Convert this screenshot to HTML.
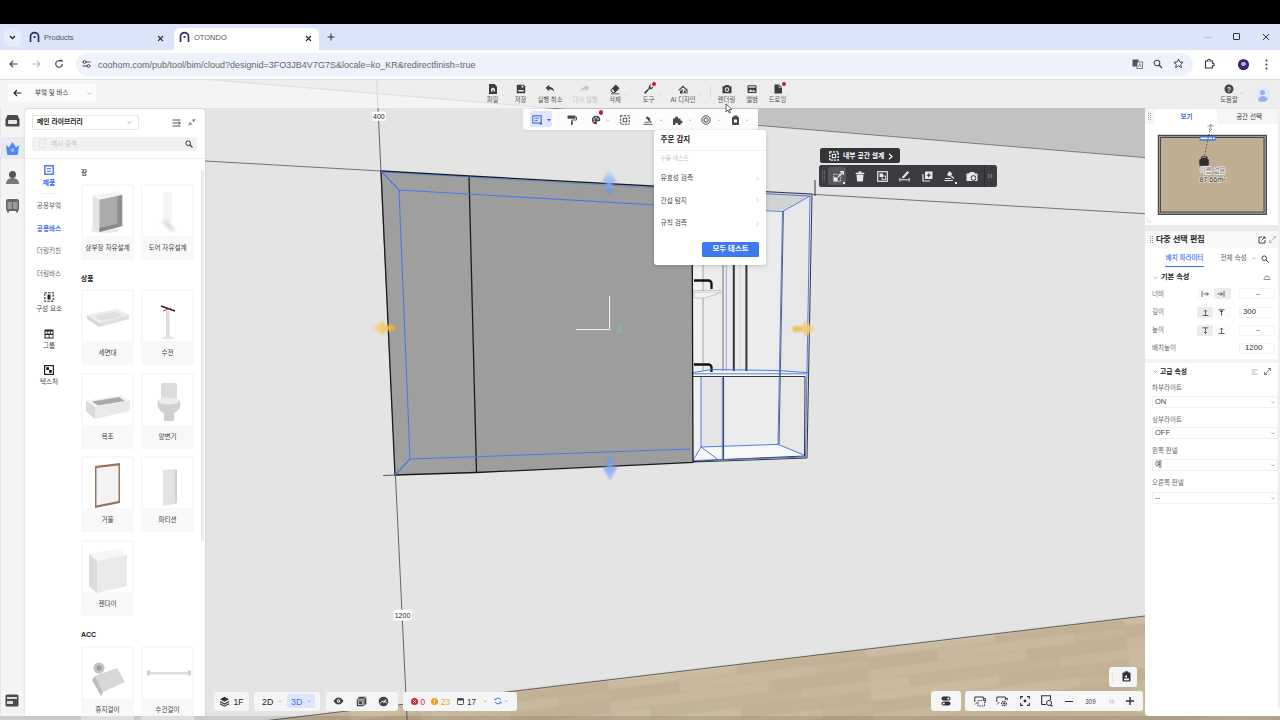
<!DOCTYPE html>
<html lang="ko">
<head>
<meta charset="utf-8">
<title>OTONDO</title>
<style>
*{box-sizing:border-box;margin:0;padding:0}
html,body{width:1280px;height:720px;overflow:hidden;background:#000}
body{font-family:"Liberation Sans","Noto Sans CJK KR",sans-serif;font-size:7px;color:#333;position:relative}
.abs{position:absolute}
#blackbar{left:0;top:0;width:1280px;height:24px;background:#000}
#tabbar{left:0;top:24px;width:1280px;height:26px;background:#dbe4f8}
#addr{left:0;top:50px;width:1280px;height:29px;background:#fff}
#app{left:0;top:79px;width:1280px;height:641px;background:#f3f3f4;overflow:hidden}
.t{position:absolute;white-space:nowrap;line-height:1}
.c{transform:translate(-50%,-50%)}
.cy{transform:translateY(-50%)}
.box{position:absolute;background:#f5f5f5;border-radius:3px}
svg{position:absolute;overflow:visible}
</style>
</head>
<body>
<div id="blackbar" class="abs"></div>

<!-- ===== browser tab bar ===== -->
<div id="tabbar" class="abs">
  <div class="abs" style="left:4px;top:4px;width:17px;height:18px;border-radius:5px;background:#e7edfa"></div>
  <svg style="left:9px;top:11px" width="7" height="5" viewBox="0 0 7 5"><path d="M1 1l2.5 2.5L6 1" fill="none" stroke="#222" stroke-width="1.3"/></svg>
  <!-- tab 1 -->
  <svg style="left:29px;top:7.800px" width="11" height="11" viewBox="0 0 11 11"><path d="M1.5 10V4.2A4 3.6 0 0 1 9.500 4.200V10" fill="none" stroke="#2b2f63" stroke-width="1.7"/><rect x="4.600" y="4" width="1.8" height="2" fill="#2b2f63"/></svg>
  <div class="t cy" style="left:44px;top:14px;font-size:7.5px;color:#555">Products</div>
  <svg style="left:157px;top:10.500px" width="7" height="7" viewBox="0 0 7 7"><path d="M1 1l5 5M6 1L1 6" stroke="#333" stroke-width="1.100"/></svg>
  <!-- tab 2 active -->
  <div class="abs" style="left:174px;top:4px;width:145px;height:23px;background:#fff;border-radius:6px 6px 0 0"></div>
  <svg style="left:179px;top:7.800px" width="11" height="11" viewBox="0 0 11 11"><path d="M1.5 10V4.2A4 3.6 0 0 1 9.500 4.200V10" fill="none" stroke="#2b2f63" stroke-width="1.7"/><rect x="4.600" y="4" width="1.8" height="2" fill="#2b2f63"/></svg>
  <div class="t cy" style="left:194px;top:14px;font-size:7.5px;color:#555">OTONDO</div>
  <svg style="left:305px;top:10.500px" width="7" height="7" viewBox="0 0 7 7"><path d="M1 1l5 5M6 1L1 6" stroke="#222" stroke-width="1.100"/></svg>
  <svg style="left:327px;top:9px" width="8" height="8" viewBox="0 0 8 8"><path d="M4 .5v7M.5 4h7" stroke="#333" stroke-width="1.100"/></svg>
  <!-- window controls -->
  <div class="abs" style="left:1204px;top:13px;width:8px;height:1px;background:#b8c0d0"></div>
  <div class="abs" style="left:1233px;top:9px;width:7px;height:7px;border:1px solid #333;border-radius:1px"></div>
  <svg style="left:1262px;top:9px" width="8" height="8" viewBox="0 0 8 8"><path d="M1 1l6 6M7 1L1 7" stroke="#333" stroke-width="1"/></svg>
</div>

<!-- ===== address bar ===== -->
<div id="addr" class="abs">
  <svg style="left:9px;top:10px" width="9" height="8" viewBox="0 0 9 8"><path d="M8.500 4H1M4 1L1 4l3 3" fill="none" stroke="#444" stroke-width="1.100"/></svg>
  <svg style="left:32px;top:10px" width="9" height="8" viewBox="0 0 9 8"><path d="M.5 4H8M5 1l3 3-3 3" fill="none" stroke="#b5b5b5" stroke-width="1.100"/></svg>
  <svg style="left:54px;top:9px" width="10" height="10" viewBox="0 0 10 10"><path d="M8.300 5A3.300 3.300 0 1 1 7 2.300" fill="none" stroke="#444" stroke-width="1.200"/><path d="M5.800.8h2.700v2.700z" fill="#444"/></svg>
  <div class="abs" style="left:76px;top:3px;width:1117px;height:23px;border-radius:12px;background:#eef2fb"></div>
  <svg style="left:82px;top:10px" width="9" height="8" viewBox="0 0 9 8"><path d="M.5 2h8M.5 6h8" stroke="#444" stroke-width="1"/><circle cx="2.500" cy="2" r="1.400" fill="#eef2fb" stroke="#444"/><circle cx="6.500" cy="6" r="1.400" fill="#eef2fb" stroke="#444"/></svg>
  <div class="t cy" style="left:98px;top:14.500px;font-size:9px;color:#666">coohom.com/pub/tool/bim/cloud?designid=3FO3JB4V7G7S&amp;locale=ko_KR&amp;redirectfinish=true</div>
  <!-- right icons -->
  <svg style="left:1132px;top:9px" width="11" height="10" viewBox="0 0 11 10"><rect x=".5" y=".5" width="6" height="7" fill="#555"/><rect x="5" y="3" width="5.500" height="6.500" fill="#fff" stroke="#555" stroke-width=".8"/><path d="M6.500 8l1.300-3.500L9 8" fill="none" stroke="#555" stroke-width=".7"/></svg>
  <svg style="left:1153px;top:9px" width="10" height="10" viewBox="0 0 10 10"><circle cx="4" cy="4" r="2.800" fill="none" stroke="#444" stroke-width="1.100"/><path d="M6 6l3 3" stroke="#444" stroke-width="1.200"/></svg>
  <svg style="left:1173px;top:8px" width="11" height="11" viewBox="0 0 11 11"><path d="M5.500 1l1.400 3 3.200.3-2.400 2.100.7 3.200-2.900-1.700-2.900 1.700.7-3.200L.9 4.300 4.100 4z" fill="none" stroke="#333" stroke-width=".9"/></svg>
  <svg style="left:1204px;top:8px" width="11" height="11" viewBox="0 0 11 11"><path d="M1.500 3h2.300a1.300 1.300 0 1 1 2.400 0H8.500v2.300a1.300 1.300 0 1 1 0 2.400V10h-7z" fill="none" stroke="#333" stroke-width="1.100"/></svg>
  <div class="abs" style="left:1238px;top:9px;width:11px;height:11px;border-radius:50%;background:radial-gradient(circle at 50% 45%,#c9a0d8 0 25%,#3b2a6e 30% 60%,#1d1740 65%)"></div>
  <svg style="left:1265px;top:9px" width="3" height="11" viewBox="0 0 3 11"><circle cx="1.500" cy="1.500" r="1" fill="#333"/><circle cx="1.500" cy="5.500" r="1" fill="#333"/><circle cx="1.500" cy="9.500" r="1" fill="#333"/></svg>
</div>

<!-- ===== app ===== -->
<div id="app" class="abs">

<!-- ===== 3D viewport scene (coords are page coords; svg offset -79) ===== -->
<svg id="scene" style="left:0;top:-79px" width="1280" height="720" viewBox="0 0 1280 720">
  <defs>
    <pattern id="wood" width="260" height="44" patternUnits="userSpaceOnUse" patternTransform="rotate(-7)">
      <rect width="260" height="44" fill="#c6b69b"/>
      <rect x="0" y="0" width="130" height="11" fill="#cabba1"/>
      <rect x="130" y="0" width="130" height="11" fill="#c2b195"/>
      <rect x="0" y="11" width="70" height="11" fill="#c1b094"/>
      <rect x="70" y="11" width="140" height="11" fill="#c9ba9f"/>
      <rect x="210" y="11" width="50" height="11" fill="#c4b498"/>
      <rect x="0" y="22" width="160" height="11" fill="#c8b99e"/>
      <rect x="160" y="22" width="100" height="11" fill="#c1b095"/>
      <rect x="0" y="33" width="40" height="11" fill="#cabba0"/>
      <rect x="40" y="33" width="150" height="11" fill="#c3b397"/>
      <rect x="190" y="33" width="70" height="11" fill="#c7b89d"/>
    <path d="M0 0h260M0 11h260M0 22h260M0 33h260" stroke="#a89878" stroke-width=".6" opacity=".55"/><path d="M130 0v11M70 11v11M210 11v11M160 22v11M40 33v11M190 33v11" stroke="#a89878" stroke-width=".6" opacity=".5"/></pattern>
    <filter id="blur1"><feGaussianBlur stdDeviation="1.2"/></filter>
  </defs>
  <!-- wall -->
  <rect x="0" y="79" width="1280" height="641" fill="#e4e4e4"/>
  <!-- ceiling -->
  <polygon points="201,79 1280,79 1280,168.800" fill="#c2c2c2"/>
  <path d="M201 79L1145 157.600" stroke="#666" stroke-width=".8"/>
  <!-- wall line -->
  <path d="M205 161L381 171M812 194.300L1145 213.700" stroke="#555" stroke-width=".8"/>
  <!-- floor -->
  <polygon points="205,728 1290,598.700 1290,730 205,730" fill="url(#wood)" filter="url(#blur1)"/>
  <path d="M205 728L1145 616" stroke="#555" stroke-width=".9"/>
  <!-- vertical dimension line -->
  <path d="M376.600 79L407.200 722" stroke="#444" stroke-width=".8"/>

  <!-- cabinet: right open unit interior -->
  <polygon points="693,188 812,194 807,458 693,462" fill="#ebebeb"/>
  <polygon points="782.500,210.500 812,194 807,458 778,444.400" fill="#e7e7e7"/>
  <polygon points="693,188 812,194 782.500,210.500 693,206" fill="#d2d2d2"/>
  <!-- lower section fills -->
  <polygon points="693,377 701,377 701,447 693,461" fill="#f1f1f1"/>
  <polygon points="701,377 723,377 723,446.300 701,447" fill="#e5e5e5"/>
  <polygon points="723,377 778,377 778,444.400 723,446.300" fill="#ececec"/>
  <polygon points="693,461.600 718.400,459.800 805,456 778,444.400 701,447" fill="#f7f7f7"/>
  <!-- shelf -->
  <polygon points="693,371 808,372.500 805,376.500 693,376.500" fill="#f6f6f6"/>
  <!-- rods -->
  <rect x="694" y="250" width="9" height="121" fill="#f1f1f1"/>
  <path d="M703 250V371" stroke="#777" stroke-width=".6"/>
  <path d="M723 250V371" stroke="#444" stroke-width=".7"/>
  <path d="M726.300 250V371" stroke="#6a7fc0" stroke-width=".6"/>
  <path d="M733.800 250V371" stroke="#333" stroke-width="2"/>
  <path d="M746.400 250V371" stroke="#333" stroke-width="2"/>
  <path d="M740 250V371" stroke="#bbb" stroke-width=".5"/>
  <!-- hooks + small shelf -->
  <path d="M694 280.500h14.500a3 3 0 0 1 3 3V289" fill="none" stroke="#111" stroke-width="2.300"/>
  <path d="M694 364.500h14.500a3 3 0 0 1 3 3V372" fill="none" stroke="#111" stroke-width="2.300"/>
  <path d="M694 290.500h28.500v1.500l-18 6h-10.500z" fill="#f2f2f2" stroke="#999" stroke-width=".5"/>
  <path d="M694 292.300h28.500" stroke="#bbb" stroke-width=".6"/>
  <!-- black edges -->
  <g fill="none" stroke="#222" stroke-width=".9">
    <path d="M693 188L812 194L807 458L693 462"/>
    <path d="M693 376.500H805"/>
    <path d="M723.600 376.500V460M805 376.500L804.500 456"/>
    <path d="M693 461.600L718.400 459.800L805 456"/>
    <path d="M815 180V196"/><path d="M783.400 211L779 444.400" stroke-width=".7"/>
  </g>
  <!-- blue edges -->
  <g fill="none" stroke="#3e6ee8" stroke-width=".9">
    <path d="M693 190L810 196L805.500 457L693 460.500"/>
    <path d="M810 196L782.500 211.500L778 444.400L804 455"/>
    <path d="M693 207L782.500 211.500"/>
    <path d="M693 372.500L712 369.500L778 370.500L808 372.700M693 373.800H806"/>
    <path d="M701 376.500V447M722.300 376.500V460"/>
    <path d="M701 447L778 444.400M701 447L718.400 459.800M701 447L693 460.500"/>
  </g>

  <!-- cabinet grey faces -->
  <polygon points="381,171 469,176 476.500,472.500 395,475" fill="#9f9f9f"/>
  <polygon points="469,176 692,188 693,462.500 476.500,472.500" fill="#9d9d9d"/>
  <g fill="none" stroke="#1a1a1a" stroke-width="1.300">
    <path d="M381 171L469 176L692 188L693 462.500L476.500 472.500L395 475Z"/>
    <path d="M469 176L476.500 472.500"/>
  </g>
  <path d="M383 475.500l12-.5" stroke="#333" stroke-width=".8"/>
  <g fill="none" stroke="#4a78ea" stroke-width="1.100">
    <path d="M399 190L690 207M410 459L690 449M399 190L410 459"/>
    <path d="M381 171L399 190M395 475L410 459"/>
    <path d="M383 172L692 190" opacity=".6"/>
  </g>
  <!-- axis gizmo -->
  <path d="M609.600 296V329.600H576" fill="none" stroke="#f6f6f6" stroke-width="1"/>
  <path d="M616 333l3.500-11 3.500 11z" fill="#7ccaa8" opacity=".5"/>
  <!-- arrows -->
  <linearGradient id="gu" x1="0" y1="0" x2="0" y2="1"><stop offset="0" stop-color="#dfe8fb"/><stop offset=".55" stop-color="#8fb0f3"/><stop offset="1" stop-color="#5f8ff0"/></linearGradient>
  <linearGradient id="gd" x1="0" y1="1" x2="0" y2="0"><stop offset="0" stop-color="#a9c2f6"/><stop offset=".55" stop-color="#7ea3f2"/><stop offset="1" stop-color="#6a96f0"/></linearGradient>
  <linearGradient id="gl" x1="0" y1="0" x2="1" y2="0"><stop offset="0" stop-color="#f7d98f"/><stop offset="1" stop-color="#f0b43a"/></linearGradient>
  <linearGradient id="gr" x1="1" y1="0" x2="0" y2="0"><stop offset="0" stop-color="#f7d98f"/><stop offset="1" stop-color="#f0b43a"/></linearGradient>
  <g opacity=".82">
    <path d="M609.200 167.500l7.500 15h-4.500v10.500h-6v-10.500h-4.500z" fill="url(#gu)" filter="url(#blur1)"/>
    <path d="M610 481l7.500-14h-4.500v-9.500h-6v9.500h-4.500z" fill="url(#gd)" filter="url(#blur1)"/>
  </g>
  <g opacity=".85">
    <path d="M372 328l12-8v5h11v6h-11v5z" fill="url(#gl)" filter="url(#blur1)"/>
    <path d="M816 329l-12-8v5h-11v6h11v5z" fill="url(#gr)" filter="url(#blur1)"/>
  </g>
  <!-- dimension labels -->
  <rect x="372" y="111.800" width="13.800" height="9" rx="1.500" fill="#fff"/>
  <text x="378.900" y="118.900" font-size="7" text-anchor="middle" fill="#222" font-family="Liberation Sans, sans-serif">400</text>
  <rect x="393.300" y="609.400" width="18.400" height="11.200" rx="1.800" fill="#fff"/>
  <text x="402.500" y="617.500" font-size="7" text-anchor="middle" fill="#222" font-family="Liberation Sans, sans-serif">1200</text>
</svg>
<!--SCENE_END-->

<!-- ===== app top toolbar ===== -->
<div class="abs" style="left:0;top:0;width:1280px;height:29px;background:rgba(249,249,250,.79)"></div><div class="abs" style="left:0;top:0;width:1280px;height:1px;background:#dcdde0"></div>
<div class="abs" style="left:8px;top:5px;width:88px;height:18px;background:#fbfbfb;border-radius:3px"></div>
<svg style="left:13px;top:10px" width="9" height="8" viewBox="0 0 9 8"><path d="M8.500 4H1M4 1L1 4l3 3" fill="none" stroke="#222" stroke-width="1.100"/></svg>
<div class="t cy" style="left:35px;top:14px;font-size:6.500px;color:#333">부엌 및 바스</div>
<svg style="left:87px;top:13px" width="5" height="3" viewBox="0 0 5 3"><path d="M.5.5l2 2 2-2" fill="none" stroke="#aaa" stroke-width=".8"/></svg>
<svg style="left:487.5px;top:5.0px" width="10" height="10" viewBox="0 0 10 10"><path d="M1 0h5.500L9 2.500V10H1z" fill="#3d3d3d"/><path d="M3 7.500V5l2-1.600L7 5v2.500z" fill="#f4f4f4"/><rect x="4.400" y="5.600" width="1.200" height="1.900" fill="#3d3d3d"/></svg>
<div class="t c" style="left:492.5px;top:21px;font-size:6.300px;color:#555">파일</div>
<svg style="left:515.5px;top:5.0px" width="10" height="10" viewBox="0 0 10 10"><path d="M.8.800h7l1.400 1.400v7H.8z" fill="#3d3d3d"/><rect x="5.600" y="1.600" width="1.800" height="2" fill="#f0f0f0"/><rect x="2.300" y="6" width="5.400" height="1.500" fill="#f0f0f0"/></svg>
<div class="t c" style="left:520.5px;top:21px;font-size:6.300px;color:#555">저장</div>
<svg style="left:545.0px;top:5.0px" width="10" height="10" viewBox="0 0 10 10"><path d="M4.200.8L.6 4l3.600 3.200V5.200c2.400-.1 4 .7 5 2.800C9 4.800 7.300 3 4.200 2.800z" fill="#3d3d3d"/></svg>
<div class="t c" style="left:550px;top:21px;font-size:6.300px;color:#555">실행 취소</div>
<svg style="left:580.0px;top:5.0px" width="10" height="10" viewBox="0 0 10 10"><path d="M5.800.8L9.400 4 5.800 7.200V5.200c-2.400-.1-4 .7-5 2.800C1 4.800 2.700 3 5.800 2.800z" fill="#c4c4c4"/></svg>
<div class="t c" style="left:585px;top:21px;font-size:6.300px;color:#c4c4c4">다시 실행</div>
<svg style="left:610.0px;top:5.0px" width="10" height="10" viewBox="0 0 10 10"><path d="M5.800.5L9.600 4.300 5 8.900H2.600L.6 6.900a.8.800 0 0 1 0-1.100z" fill="#3d3d3d"/><path d="M1.200 6.300l2 2h1.500L2.700 5z" fill="#f4f4f4"/><path d="M1 9.800h8.500" stroke="#3d3d3d" stroke-width=".8"/></svg>
<div class="t c" style="left:615px;top:21px;font-size:6.300px;color:#555">삭제</div>
<svg style="left:643.5px;top:5.0px" width="10" height="10" viewBox="0 0 10 10"><path d="M9.300 2.300A2.800 2.800 0 0 1 5.500 5L2 9.300a1 1 0 0 1-1.500-1.400L4.800 4.300A2.800 2.800 0 0 1 7.500.6L6 2.200l1.400 1.500z" fill="#3d3d3d"/></svg>
<div class="t c" style="left:648.5px;top:21px;font-size:6.300px;color:#555">도구</div>
<svg style="left:678.0px;top:5.0px" width="10" height="10" viewBox="0 0 10 10"><path d="M.3 6L5 1.500 9.700 6l-.8.800L5 3.200 1.100 6.800z" fill="#3d3d3d"/><path d="M2 7.200l2.600-2.300V9.600H2zM5.300 9.600l1.600-4.200 1.600 4.200h-.9L7.300 8.700H6.500L6.200 9.600zM8.700 5.500h.8v4.100h-.8z" fill="#3d3d3d"/></svg>
<div class="t c" style="left:683px;top:21px;font-size:6.300px;color:#555">AI 디자인</div>
<svg style="left:721.5px;top:5.0px" width="10" height="10" viewBox="0 0 10 10"><path d="M.5 2.300h2L3.300 1h3.400l.8 1.300h2v7H.5z" fill="#3d3d3d"/><circle cx="5" cy="5.600" r="2.300" fill="#f4f4f4"/><circle cx="5" cy="5.600" r="1.400" fill="#3d3d3d"/><path d="M5 5.600L6.800 3.800" stroke="#f4f4f4" stroke-width=".6"/></svg>
<div class="t c" style="left:726.5px;top:21px;font-size:6.300px;color:#555">렌더링</div>
<svg style="left:747.0px;top:5.0px" width="10" height="10" viewBox="0 0 10 10"><rect x=".5" y="1.300" width="9" height="7.800" rx=".8" fill="#3d3d3d"/><path d="M1.500 7.800l2.200-2.600 1.600 1.700 1.300-1.100 2 2z" fill="#f4f4f4"/><rect x="1.500" y="2.300" width="7" height="1.300" fill="#f4f4f4"/></svg>
<div class="t c" style="left:752px;top:21px;font-size:6.300px;color:#555">앨범</div>
<svg style="left:772.5px;top:5.0px" width="10" height="10" viewBox="0 0 10 10"><path d="M1.500.5h4.800L9 3.200v6.300H1.500z" fill="#3d3d3d"/><path d="M6.100.7v2.700h2.700" fill="none" stroke="#f4f4f4" stroke-width=".6"/></svg>
<div class="t c" style="left:777.5px;top:21px;font-size:6.300px;color:#555">드로잉</div>
<svg style="left:501.5px;top:14.500px" width="3" height="2" viewBox="0 0 3 2"><path d="M.3.300l1.200 1.200L2.700.3" fill="none" stroke="#c4c4c4" stroke-width=".6"/></svg>
<svg style="left:624.5px;top:14.500px" width="3" height="2" viewBox="0 0 3 2"><path d="M.3.300l1.200 1.200L2.700.3" fill="none" stroke="#c4c4c4" stroke-width=".6"/></svg>
<svg style="left:657.5px;top:14.500px" width="3" height="2" viewBox="0 0 3 2"><path d="M.3.300l1.200 1.200L2.700.3" fill="none" stroke="#c4c4c4" stroke-width=".6"/></svg>
<svg style="left:698.5px;top:14.500px" width="3" height="2" viewBox="0 0 3 2"><path d="M.3.300l1.200 1.200L2.700.3" fill="none" stroke="#c4c4c4" stroke-width=".6"/></svg>
<svg style="left:786.5px;top:14.500px" width="3" height="2" viewBox="0 0 3 2"><path d="M.3.300l1.200 1.200L2.700.3" fill="none" stroke="#c4c4c4" stroke-width=".6"/></svg>
<div class="abs" style="left:652.3px;top:3.3px;width:4px;height:4px;border-radius:50%;background:#d0162c"></div>
<div class="abs" style="left:781.8px;top:3.3px;width:4px;height:4px;border-radius:50%;background:#d0162c"></div>
<div class="abs" style="left:710px;top:7px;width:1px;height:12px;background:#dcdcdc"></div>
<svg style="left:1224px;top:5px" width="10" height="10" viewBox="0 0 10 10"><circle cx="5" cy="5" r="4.500" fill="#444"/><text x="5" y="7.600" font-size="7" font-weight="bold" text-anchor="middle" fill="#f4f4f4" font-family="Liberation Sans, sans-serif">?</text></svg>
<div class="t c" style="left:1229px;top:20.5px;font-size:6.300px;color:#555">도움말</div>
<svg style="left:1240px;top:12.500px" width="4" height="3" viewBox="0 0 4 3"><path d="M.5.500l1.500 1.500 1.500-1.500" fill="none" stroke="#bbb" stroke-width=".7"/></svg>
<div class="abs" style="left:1255px;top:8px;width:15px;height:15px;border-radius:50%;background:#dfe9fb;overflow:hidden"><div class="abs" style="left:5px;top:2.500px;width:5px;height:5px;border-radius:50%;background:#8fb3f2"></div><div class="abs" style="left:2.500px;top:8.500px;width:10px;height:8px;border-radius:5px 5px 0 0;background:#8fb3f2"></div></div>
<!--TOPBAR_END-->

<!-- ===== left rail + library panel ===== -->
<div class="abs" style="left:0;top:29px;width:25px;height:607.500px;background:#f4f4f6"></div><div class="abs" style="left:0;top:29px;width:1px;height:607px;background:#e6e6e8"></div>
<div class="abs" style="left:0;top:58px;width:25px;height:22px;background:#e9eaee"></div>
<svg style="left:5px;top:35px" width="15" height="13" viewBox="0 0 15 13"><path d="M2.500 1h10l2 4.500v6a1 1 0 0 1-1 1h-12a1 1 0 0 1-1-1v-6z" fill="#4a4a4a"/><rect x="3" y="6" width="9" height="4" rx="1" fill="#e8e8e8"/></svg>
<svg style="left:5px;top:62px" width="15" height="14" viewBox="0 0 15 14"><path d="M1 4l3 2.500L7.500 1 11 6.500 14 4l-1 8.500a1.500 1.500 0 0 1-1.500 1.500h-8A1.500 1.500 0 0 1 2 12.500z" fill="#4d86f5"/><circle cx="7.500" cy="9" r="2" fill="#9dbdfa"/></svg>
<svg style="left:5px;top:91px" width="15" height="15" viewBox="0 0 15 15"><circle cx="7.500" cy="4.500" r="3.500" fill="#555"/><path d="M1 14c0-4 3-6 6.500-6s6.500 2 6.500 6z" fill="#777"/></svg>
<svg style="left:5px;top:119px" width="15" height="15" viewBox="0 0 15 15"><rect x="1" y="1" width="13" height="12" rx="2" fill="#666"/><rect x="2.500" y="4" width="4.500" height="7" fill="#999"/><rect x="8" y="4" width="4.500" height="7" fill="#999"/><rect x="2" y="13" width="2" height="1.500" fill="#666"/><rect x="11" y="13" width="2" height="1.500" fill="#666"/></svg>
<svg style="left:5px;top:615px" width="14" height="13" viewBox="0 0 14 13"><rect x=".5" y=".5" width="13" height="12" rx="1.500" fill="#4a4a4a"/><rect x="2" y="3" width="10" height="2" fill="#ddd"/><rect x="2" y="7" width="6" height="3" fill="#ddd"/></svg>
<div class="abs" style="left:25px;top:30px;width:180px;height:606.500px;background:#fff;border-radius:4px 4px 0 0;box-shadow:0 0 3px rgba(0,0,0,.12)"></div>
<div class="abs" style="left:31.500px;top:35.5px;width:107px;height:15px;border:1px solid #e6e6e6;border-radius:2px;background:#fff"></div>
<div class="t cy" style="left:37px;top:43px;font-size:6.800px;font-weight:bold;color:#222">메인 라이브러리</div>
<svg style="left:127px;top:42px" width="5" height="3" viewBox="0 0 5 3"><path d="M.5.500l2 2 2-2" fill="none" stroke="#aaa" stroke-width=".8"/></svg>
<svg style="left:172px;top:39.5px" width="9" height="8" viewBox="0 0 9 8"><path d="M.5 1h8M.5 4h8M.5 7h8" stroke="#444" stroke-width=".9"/><path d="M6.500 2.500L8.500 4 6.500 5.500" fill="none" stroke="#444" stroke-width=".7"/></svg>
<svg style="left:188px;top:39px" width="8" height="8" viewBox="0 0 8 8"><path d="M7.500.5L5 3M5 1v2h2M.5 7.500L3 5M3 7V5H1" fill="none" stroke="#555" stroke-width=".8"/></svg>
<div class="abs" style="left:32px;top:57.5px;width:165px;height:14px;background:#f1f1f2;border-radius:2px"></div>
<div class="abs" style="left:39px;top:60px;width:7px;height:9px;border:1px solid #e4e4e4;border-radius:1px"></div>
<div class="t cy" style="left:51px;top:64.5px;font-size:6.500px;color:#c4c4c4">메시 검색</div>
<svg style="left:185px;top:61px" width="8" height="8" viewBox="0 0 8 8"><circle cx="3.200" cy="3.200" r="2.300" fill="none" stroke="#333" stroke-width="1"/><path d="M5 5l2.500 2.500" stroke="#333" stroke-width="1.100"/></svg>
<div class="abs" style="left:25px;top:79px;width:180px;height:1px;background:#ededed"></div>
<svg style="left:44px;top:86px" width="10" height="10" viewBox="0 0 10 10"><rect x=".8" y=".8" width="8.400" height="8.400" fill="none" stroke="#4463e6" stroke-width="1.300"/><path d="M2.800 3.700h4.400M2.800 6.300h4.400" stroke="#4463e6" stroke-width="1"/></svg>
<div class="t c" style="left:49px;top:103.5px;font-size:6.800px;font-weight:bold;color:#3a6cf0">제품</div>
<div class="abs" style="left:41px;top:114px;width:16px;height:1px;background:#eee"></div>
<div class="t c" style="left:49px;top:127px;font-size:6.600px;color:#666">공용부엌</div>
<div class="t c" style="left:49px;top:149.5px;font-size:6.600px;font-weight:bold;color:#3a6cf0">공용바스</div>
<div class="t c" style="left:49px;top:172px;font-size:6.600px;color:#666">더링키친</div>
<div class="t c" style="left:49px;top:194.5px;font-size:6.600px;color:#666">더링바스</div>
<svg style="left:44px;top:213px" width="10" height="10" viewBox="0 0 10 10"><rect x=".8" y=".8" width="8.400" height="8.400" fill="none" stroke="#222" stroke-width="1.100" stroke-dasharray="2.200 1.200"/><rect x="3.500" y="2.500" width="3" height="5" rx=".6" fill="#222"/></svg>
<div class="t c" style="left:49px;top:230px;font-size:6.600px;color:#444">구성 요소</div>
<svg style="left:44px;top:250px" width="10" height="10" viewBox="0 0 10 10"><rect x=".5" y=".5" width="9" height="9" fill="#222"/><rect x="1.500" y="2.500" width="2" height="2.200" fill="#fff"/><rect x="4.200" y="2.500" width="2" height="2.200" fill="#fff"/><rect x="6.900" y="2.500" width="1.800" height="2.200" fill="#fff"/><rect x="1.500" y="6" width="3.200" height="2.500" fill="#fff"/><rect x="5.500" y="6" width="3.200" height="2.500" fill="#fff"/></svg>
<div class="t c" style="left:49px;top:267px;font-size:6.600px;color:#444">그룹</div>
<svg style="left:44px;top:286px" width="10" height="10" viewBox="0 0 10 10"><rect x=".6" y=".6" width="8.800" height="8.800" fill="#fff" stroke="#222" stroke-width="1.200"/><rect x="2.200" y="2.200" width="2.800" height="2.800" fill="#222"/><rect x="5" y="5" width="2.800" height="2.800" fill="#222"/></svg>
<div class="t c" style="left:49px;top:303px;font-size:6.600px;color:#444">텍스처</div>
<div class="t cy" style="left:81px;top:93.5px;font-size:6.800px;font-weight:500;color:#222">장</div>
<div class="t cy" style="left:81px;top:199.5px;font-size:6.800px;font-weight:bold;color:#222">상품</div>
<div class="t cy" style="left:81px;top:555px;font-size:7px;font-weight:bold;color:#222">ACC</div>
<div class="abs" style="left:81px;top:105px;width:53px;height:76px;background:#f8f8f9;border-radius:2px;overflow:hidden"><svg style="left:0;top:0" width="53" height="56" viewBox="0 0 53 56"><defs><filter id="tb"><feGaussianBlur stdDeviation=".5"/></filter><filter id="tb2"><feGaussianBlur stdDeviation="1.800"/></filter></defs><rect x="2" y="2" width="49" height="50" fill="#fff"/><g filter="url(#tb)"><ellipse cx="24" cy="46" rx="14" ry="3" fill="#eaeaea"/><polygon points="18.200,15.500 41.200,10.800 41.200,42 18.200,48" fill="#ababab"/><polygon points="36.500,12 41.200,10.800 41.200,42 36.500,39.700" fill="#8f8f8f"/><polygon points="18.200,44 36.500,39.700 41.200,42 18.200,48" fill="#888"/><polygon points="11.700,11.300 18.200,15.500 18.200,48 11.700,44.400" fill="#e4e4e4"/><polygon points="11.700,11.300 38.900,7.200 41.200,10.800 18.200,15.500" fill="#f3f3f3"/></g></svg><div class="t c" style="left:26.500px;top:64px;font-size:6.600px;color:#444">상부장 자유설계</div></div>
<div class="abs" style="left:141px;top:105px;width:53px;height:76px;background:#f8f8f9;border-radius:2px;overflow:hidden"><svg style="left:0;top:0" width="53" height="56" viewBox="0 0 53 56"><defs><filter id="tb"><feGaussianBlur stdDeviation=".5"/></filter><filter id="tb2"><feGaussianBlur stdDeviation="1.800"/></filter></defs><rect x="2" y="2" width="49" height="50" fill="#fff"/><polygon points="22,8 31,9 31,38 22,36" fill="#f5f5f5" filter="url(#tb)"/><polygon points="20,37 27,36 34,46 30,48" fill="#dedede" filter="url(#tb2)"/></svg><div class="t c" style="left:26.500px;top:64px;font-size:6.600px;color:#444">도어 자유설계</div></div>
<div class="abs" style="left:81px;top:210px;width:53px;height:76px;background:#f8f8f9;border-radius:2px;overflow:hidden"><svg style="left:0;top:0" width="53" height="56" viewBox="0 0 53 56"><defs><filter id="tb"><feGaussianBlur stdDeviation=".5"/></filter><filter id="tb2"><feGaussianBlur stdDeviation="1.800"/></filter></defs><rect x="2" y="2" width="49" height="50" fill="#fff"/><polygon points="6,26 36,20 48,26 18,34" fill="#ececec"/><polygon points="6,26 18,34 18,38 6,30" fill="#d6d6d6"/><polygon points="18,34 48,26 48,30 18,38" fill="#dedede"/><polygon points="14,27 34,23 42,27 21,32" fill="#e0e0e0"/></svg><div class="t c" style="left:26.500px;top:64px;font-size:6.600px;color:#444">세면대</div></div>
<div class="abs" style="left:141px;top:210px;width:53px;height:76px;background:#f8f8f9;border-radius:2px;overflow:hidden"><svg style="left:0;top:0" width="53" height="56" viewBox="0 0 53 56"><defs><filter id="tb"><feGaussianBlur stdDeviation=".5"/></filter><filter id="tb2"><feGaussianBlur stdDeviation="1.800"/></filter></defs><rect x="2" y="2" width="49" height="50" fill="#fff"/><rect x="25" y="22" width="3.500" height="26" fill="#dcdcdc"/><path d="M20 17l14 5" stroke="#222" stroke-width="1.800"/><path d="M22 22l8-3" stroke="#c33" stroke-width="1"/><ellipse cx="27" cy="49" rx="6" ry="1.500" fill="#e6e6e6"/></svg><div class="t c" style="left:26.500px;top:64px;font-size:6.600px;color:#444">수전</div></div>
<div class="abs" style="left:81px;top:294px;width:53px;height:76px;background:#f8f8f9;border-radius:2px;overflow:hidden"><svg style="left:0;top:0" width="53" height="56" viewBox="0 0 53 56"><defs><filter id="tb"><feGaussianBlur stdDeviation=".5"/></filter><filter id="tb2"><feGaussianBlur stdDeviation="1.800"/></filter></defs><rect x="2" y="2" width="49" height="50" fill="#fff"/><polygon points="5,28 40,22 49,28 49,38 14,46 5,38" fill="#e9e9e9"/><polygon points="5,28 40,22 49,28 14,34" fill="#f4f4f4"/><polygon points="11,28.500 38,24 44,28 17,32.500" fill="#a9a9a9"/><polygon points="5,28 14,34 14,46 5,38" fill="#d9d9d9"/></svg><div class="t c" style="left:26.500px;top:64px;font-size:6.600px;color:#444">욕조</div></div>
<div class="abs" style="left:141px;top:294px;width:53px;height:76px;background:#f8f8f9;border-radius:2px;overflow:hidden"><svg style="left:0;top:0" width="53" height="56" viewBox="0 0 53 56"><defs><filter id="tb"><feGaussianBlur stdDeviation=".5"/></filter><filter id="tb2"><feGaussianBlur stdDeviation="1.800"/></filter></defs><rect x="2" y="2" width="49" height="50" fill="#fff"/><rect x="20" y="10" width="16" height="16" rx="2" fill="#dcdcdc"/><path d="M17 27h22c2 8-3 12-6 13v8H23v-8c-3-1-8-5-6-13z" fill="#d0d0d0"/><ellipse cx="28" cy="28" rx="11" ry="3.500" fill="#ebebeb"/></svg><div class="t c" style="left:26.500px;top:64px;font-size:6.600px;color:#444">양변기</div></div>
<div class="abs" style="left:81px;top:377px;width:53px;height:76px;background:#f8f8f9;border-radius:2px;overflow:hidden"><svg style="left:0;top:0" width="53" height="56" viewBox="0 0 53 56"><defs><filter id="tb"><feGaussianBlur stdDeviation=".5"/></filter><filter id="tb2"><feGaussianBlur stdDeviation="1.800"/></filter></defs><rect x="2" y="2" width="49" height="50" fill="#fff"/><polygon points="14,10 39,7 39,47 14,52" fill="#9a755c"/><polygon points="15.500,12 37.500,9.500 37.500,45 15.500,49.500" fill="#f3f3f3"/></svg><div class="t c" style="left:26.500px;top:64px;font-size:6.600px;color:#444">거울</div></div>
<div class="abs" style="left:141px;top:377px;width:53px;height:76px;background:#f8f8f9;border-radius:2px;overflow:hidden"><svg style="left:0;top:0" width="53" height="56" viewBox="0 0 53 56"><defs><filter id="tb"><feGaussianBlur stdDeviation=".5"/></filter><filter id="tb2"><feGaussianBlur stdDeviation="1.800"/></filter></defs><rect x="2" y="2" width="49" height="50" fill="#fff"/><polygon points="22,14 34,13 34,48 22,50" fill="#e3e3e3"/><polygon points="34,13 36,14 36,47 34,48" fill="#cfcfcf"/></svg><div class="t c" style="left:26.500px;top:64px;font-size:6.600px;color:#444">파티션</div></div>
<div class="abs" style="left:81px;top:461px;width:53px;height:76px;background:#f8f8f9;border-radius:2px;overflow:hidden"><svg style="left:0;top:0" width="53" height="56" viewBox="0 0 53 56"><defs><filter id="tb"><feGaussianBlur stdDeviation=".5"/></filter><filter id="tb2"><feGaussianBlur stdDeviation="1.800"/></filter></defs><rect x="2" y="2" width="49" height="50" fill="#fff"/><polygon points="8,14 38,9 46,15 46,46 16,53 8,46" fill="#e9e9e9"/><polygon points="8,14 38,9 46,15 16,21" fill="#f6f6f6"/><polygon points="8,14 16,21 16,53 8,46" fill="#dcdcdc"/></svg><div class="t c" style="left:26.500px;top:64px;font-size:6.600px;color:#444">젠다이</div></div>
<div class="abs" style="left:81px;top:567px;width:53px;height:76px;background:#f8f8f9;border-radius:2px;overflow:hidden"><svg style="left:0;top:0" width="53" height="56" viewBox="0 0 53 56"><defs><filter id="tb"><feGaussianBlur stdDeviation=".5"/></filter><filter id="tb2"><feGaussianBlur stdDeviation="1.800"/></filter></defs><rect x="2" y="2" width="49" height="50" fill="#fff"/><circle cx="18" cy="22" r="5.500" fill="#c2c2c2"/><circle cx="18" cy="22" r="2.500" fill="#9d9d9d"/><polygon points="14,30 36,22 44,36 22,46" fill="#d7d7d7"/><polygon points="14,30 22,46 20,50 11,34" fill="#bdbdbd"/></svg><div class="t c" style="left:26.500px;top:64px;font-size:6.600px;color:#444">휴지걸이</div></div>
<div class="abs" style="left:141px;top:567px;width:53px;height:76px;background:#f8f8f9;border-radius:2px;overflow:hidden"><svg style="left:0;top:0" width="53" height="56" viewBox="0 0 53 56"><defs><filter id="tb"><feGaussianBlur stdDeviation=".5"/></filter><filter id="tb2"><feGaussianBlur stdDeviation="1.800"/></filter></defs><rect x="2" y="2" width="49" height="50" fill="#fff"/><rect x="6" y="26" width="44" height="2.500" rx="1" fill="#dedede"/><rect x="6" y="24.500" width="3" height="5" fill="#cfcfcf"/><rect x="47" y="24.500" width="3" height="5" fill="#cfcfcf"/></svg><div class="t c" style="left:26.500px;top:64px;font-size:6.600px;color:#444">수건걸이</div></div>
<div class="abs" style="left:201px;top:91px;width:3px;height:371px;background:#ebebeb;border-radius:2px"></div>
<!--LEFT_END-->

<!-- ===== right panels ===== -->
<div class="abs" style="left:1145px;top:29px;width:135px;height:607.500px;background:#e9e9ea;border-radius:0 0 0 4px"></div>
<div class="abs" style="left:1145px;top:30px;width:135px;height:116px;background:#fff"></div>
<div class="abs" style="left:1145px;top:30px;width:135px;height:15px;background:#f5f5f6"></div>
<div class="abs" style="left:1155px;top:30px;width:62px;height:15px;background:#fff"></div>
<div class="abs" style="left:1148px;top:34px;width:1px;height:7px;border-left:1px dotted #999"></div>
<div class="abs" style="left:1150px;top:34px;width:1px;height:7px;border-left:1px dotted #999"></div>
<div class="t c" style="left:1186.500px;top:37.5px;font-size:6.500px;font-weight:bold;color:#3a6cf0">보기</div>
<div class="t c" style="left:1249px;top:37.5px;font-size:6.500px;color:#333">공간 선택</div>
<!-- minimap -->
<svg style="left:1157px;top:55px" width="110" height="82" viewBox="0 0 110 82">
  <rect x="1.300" y="1.300" width="108" height="79" fill="#bfae91"/>
  <rect x="2.200" y="2.200" width="106.200" height="77.200" fill="none" stroke="#9a9a9a" stroke-width="2.600"/>
  <rect x="1.300" y="1.300" width="108" height="79" fill="none" stroke="#2e2e2e" stroke-width=".9"/>
  <rect x="3.600" y="3.600" width="103.400" height="74.400" fill="none" stroke="#333" stroke-width=".8"/>
  <rect x="42.600" y="2" width="16.200" height="4.700" fill="#4a7be0"/>
  <rect x="43.600" y="3.600" width="11.500" height="1.500" fill="#fff"/><rect x="56" y="3.600" width="1.800" height="1.500" fill="#fff"/>
  <path d="M54 -10L47.500 22" stroke="#333" stroke-width=".7" stroke-dasharray="1.800 1.600"/>
  <path d="M50.500 -8h6M52 -5l1.500 1.500 1.500-1.500" fill="none" stroke="#444" stroke-width=".6"/>
  <rect x="42.300" y="25" width="9.500" height="6.800" rx="1" fill="#2f2f2f"/><path d="M44 25l.6-2.800h5.500l.6 2.800z" fill="#2f2f2f"/><path d="M45.500 23.300h3.500" stroke="#ddd" stroke-width=".6"/>
  <text x="55.500" y="39.200" font-size="6.500" text-anchor="middle" fill="#6f7480" stroke="#fff" stroke-width="1.400" stroke-opacity=".85" paint-order="stroke" font-family="Liberation Sans, Noto Sans CJK KR, sans-serif">이름 없음</text>
  <text x="55.500" y="47.500" font-size="7.200" text-anchor="middle" fill="#2a2a2a" stroke="#fff" stroke-width="1.200" stroke-opacity=".8" paint-order="stroke" font-family="Liberation Sans, Noto Sans CJK KR, sans-serif">87.66m²</text>
</svg>
<svg style="left:1146px;top:136px" width="6" height="8" viewBox="0 0 6 8"><path d="M0 2l5 6M0 5l3 3" stroke="#bbb" stroke-width=".6"/></svg>
<!-- panel 2 -->
<div class="abs" style="left:1145px;top:152px;width:135px;height:484.500px;background:#fff;border-radius:0 0 0 4px"></div><div class="abs" style="left:1145px;top:152px;width:135px;height:17px;background:#f7f7f8"></div>
<div class="abs" style="left:1150px;top:157px;width:1px;height:7px;border-left:1px dotted #888"></div>
<div class="abs" style="left:1152px;top:157px;width:1px;height:7px;border-left:1px dotted #888"></div>
<div class="t cy" style="left:1156px;top:160.5px;font-size:8px;font-weight:bold;color:#222">다중 선택 편집</div>
<svg style="left:1258px;top:156.5px" width="8" height="8" viewBox="0 0 8 8"><path d="M4 1H1v6h6V4" fill="none" stroke="#333" stroke-width=".9"/><path d="M3.500 4.500L7 1M5 1h2v2" fill="none" stroke="#333" stroke-width=".9"/></svg>
<svg style="left:1269px;top:157px" width="7" height="7" viewBox="0 0 7 7"><path d="M6.500.500L.5 6.500M4 .5h2.500V3M.5 4v2.500H3" fill="none" stroke="#aaa" stroke-width=".7"/></svg>
<div class="t c" style="left:1184.500px;top:179px;font-size:6.500px;font-weight:500;color:#3a6cf0">배치 파라미터</div>
<div class="abs" style="left:1165px;top:186.5px;width:39px;height:1.300px;background:#3a6cf0"></div>
<div class="t c" style="left:1233.500px;top:179px;font-size:6.600px;color:#555">전체 속성</div>
<svg style="left:1252px;top:178px" width="4" height="3" viewBox="0 0 4 3"><path d="M.5.500l1.500 1.500 1.500-1.500" fill="none" stroke="#999" stroke-width=".7"/></svg>
<svg style="left:1261px;top:175.5px" width="8" height="8" viewBox="0 0 8 8"><circle cx="3.200" cy="3.200" r="2.300" fill="none" stroke="#333" stroke-width=".9"/><path d="M5 5l2.500 2.500" stroke="#333" stroke-width="1"/></svg>
<svg style="left:1153px;top:196.5px" width="5" height="3" viewBox="0 0 5 3"><path d="M.5.500l2 2 2-2" fill="none" stroke="#999" stroke-width=".7"/></svg>
<div class="t cy" style="left:1161px;top:198px;font-size:7.200px;font-weight:bold;color:#222">기본 속성</div>
<svg style="left:1263px;top:194.5px" width="8" height="6" viewBox="0 0 8 6"><path d="M.5 5.500h7M1.500 4.500a2.500 2.500 0 0 1 5 0" fill="none" stroke="#666" stroke-width=".7"/></svg>
<div class="t cy" style="left:1152px;top:214.5px;font-size:6.500px;color:#666">너비</div>
<div class="abs" style="left:1197px;top:209.0px;width:16px;height:11px;background:#fafafa;border-radius:1px"></div><div class="abs" style="left:1214px;top:209.0px;width:17px;height:11px;background:#ececed;border-radius:1px"></div>
<svg style="left:1201px;top:211.5px" width="8" height="6" viewBox="0 0 8 6"><path d="M1 0v6M2.500 3h5M5.500 1.500L7.500 3 5.500 4.500" fill="none" stroke="#444" stroke-width=".8"/></svg><svg style="left:1217px;top:211.5px" width="8" height="6" viewBox="0 0 8 6"><path d="M7 0v6M.5 3h5M3.500 1.500L5.500 3 3.500 4.500" fill="none" stroke="#444" stroke-width=".8"/></svg>
<div class="abs" style="left:1239px;top:209.0px;width:36px;height:11px;border:1px solid #f3f3f3;border-radius:1px;background:#fff"></div>
<div class="t c" style="left:1258px;top:214.5px;font-size:6.500px;color:#555">–</div>
<div class="t cy" style="left:1152px;top:233px;font-size:6.500px;color:#666">깊이</div>
<div class="abs" style="left:1197px;top:227.5px;width:16px;height:11px;background:#ececed;border-radius:1px"></div><div class="abs" style="left:1214px;top:227.5px;width:17px;height:11px;background:#fafafa;border-radius:1px"></div>
<svg style="left:1201.500px;top:229.5px" width="7" height="7" viewBox="0 0 7 7"><path d="M.5 6.500h6M3.500 6V1M2 2.500L3.500 1 5 2.500" fill="none" stroke="#444" stroke-width=".8"/></svg><svg style="left:1217.500px;top:229.5px" width="7" height="7" viewBox="0 0 7 7"><path d="M.5.800h6M3.500 1v5.500M2 2.500h3" fill="none" stroke="#444" stroke-width=".9"/></svg>
<div class="abs" style="left:1239px;top:227.5px;width:36px;height:11px;border:1px solid #f3f3f3;border-radius:1px;background:#fff"></div>
<div class="t cy" style="left:1243px;top:233px;font-size:7.800px;color:#333">300</div>
<div class="t cy" style="left:1152px;top:251px;font-size:6.500px;color:#666">높이</div>
<div class="abs" style="left:1197px;top:245.5px;width:16px;height:11px;background:#ececed;border-radius:1px"></div><div class="abs" style="left:1214px;top:245.5px;width:17px;height:11px;background:#fafafa;border-radius:1px"></div>
<svg style="left:1201.500px;top:247.5px" width="7" height="7" viewBox="0 0 7 7"><path d="M.5.800h6M3.500 1v5.500M2 5L3.500 6.500 5 5" fill="none" stroke="#444" stroke-width=".8"/></svg><svg style="left:1217.500px;top:247.5px" width="7" height="7" viewBox="0 0 7 7"><path d="M.5 6.500h6M3.500 6V1M2 2.500L3.500 1 5 2.500" fill="none" stroke="#444" stroke-width=".8"/></svg>
<div class="abs" style="left:1239px;top:245.5px;width:36px;height:11px;border:1px solid #f3f3f3;border-radius:1px;background:#fff"></div>
<div class="t c" style="left:1258px;top:251px;font-size:6.500px;color:#555">–</div>
<div class="t cy" style="left:1152px;top:269px;font-size:6.500px;color:#666">배치높이</div>
<div class="abs" style="left:1239px;top:263.5px;width:36px;height:11px;border:1px solid #f3f3f3;border-radius:1px;background:#fff"></div>
<div class="t cy" style="left:1245px;top:269px;font-size:7.800px;color:#333">1200</div>
<div class="abs" style="left:1145px;top:280px;width:135px;height:4px;background:#f3f3f4"></div>
<svg style="left:1153px;top:291px" width="5" height="3" viewBox="0 0 5 3"><path d="M.5.500l2 2 2-2" fill="none" stroke="#999" stroke-width=".7"/></svg>
<div class="t cy" style="left:1160px;top:292.5px;font-size:6.800px;font-weight:bold;color:#222">고급 속성</div>
<svg style="left:1251px;top:289.5px" width="7" height="6" viewBox="0 0 7 6"><path d="M.5 .8h6M.5 3h4M.5 5.200h6" stroke="#888" stroke-width=".6"/></svg>
<svg style="left:1264px;top:289px" width="7" height="7" viewBox="0 0 7 7"><path d="M6.500.500L.5 6.500M4 .5h2.500V3M.5 4v2.500H3" fill="none" stroke="#555" stroke-width=".7"/></svg>
<div class="t cy" style="left:1152px;top:309px;font-size:6.500px;color:#666">하부라이트</div>
<div class="abs" style="left:1152px;top:316.5px;width:126px;height:12px;border:1px solid #f0f0f0;border-radius:1px;background:#fff"></div>
<div class="t cy" style="left:1155px;top:322.5px;font-size:7.500px;color:#444">ON</div>
<svg style="left:1271px;top:321.5px" width="4" height="3" viewBox="0 0 4 3"><path d="M.5.500l1.500 1.500 1.500-1.500" fill="none" stroke="#999" stroke-width=".7"/></svg>
<div class="t cy" style="left:1152px;top:340.5px;font-size:6.500px;color:#666">상부라이트</div>
<div class="abs" style="left:1152px;top:348px;width:126px;height:12px;border:1px solid #f0f0f0;border-radius:1px;background:#fff"></div>
<div class="t cy" style="left:1155px;top:354px;font-size:7.500px;color:#444">OFF</div>
<svg style="left:1271px;top:353px" width="4" height="3" viewBox="0 0 4 3"><path d="M.5.500l1.500 1.500 1.500-1.500" fill="none" stroke="#999" stroke-width=".7"/></svg>
<div class="t cy" style="left:1152px;top:372px;font-size:6.500px;color:#666">왼쪽 판넬</div>
<div class="abs" style="left:1152px;top:380px;width:126px;height:12px;border:1px solid #f0f0f0;border-radius:1px;background:#fff"></div>
<div class="t cy" style="left:1155px;top:386px;font-size:7.500px;color:#444">예</div>
<svg style="left:1271px;top:385px" width="4" height="3" viewBox="0 0 4 3"><path d="M.5.500l1.500 1.500 1.500-1.500" fill="none" stroke="#999" stroke-width=".7"/></svg>
<div class="t cy" style="left:1152px;top:403.5px;font-size:6.500px;color:#666">오른쪽 판넬</div>
<div class="abs" style="left:1152px;top:412.5px;width:126px;height:12px;border:1px solid #f0f0f0;border-radius:1px;background:#fff"></div>
<div class="t cy" style="left:1155px;top:418.5px;font-size:7.500px;color:#444">--</div>
<svg style="left:1271px;top:417.5px" width="4" height="3" viewBox="0 0 4 3"><path d="M.5.500l1.500 1.500 1.500-1.500" fill="none" stroke="#999" stroke-width=".7"/></svg>
<div class="abs" style="left:1278px;top:29px;width:2px;height:600px;background:#eeeef0"></div>
<!--RIGHT_END-->

<!-- ===== secondary toolbar ===== -->
<div class="abs" style="left:523px;top:29.5px;width:234.500px;height:21px;background:#fcfcfc;border-radius:0 0 3px 3px;box-shadow:0 1px 2px rgba(0,0,0,.08)"></div>
<div class="abs" style="left:558px;top:33px;width:1px;height:13px;background:#f1f1f1"></div><div class="abs" style="left:530px;top:32px;width:22px;height:16px;background:#dfe6fb;border-radius:2px"></div>
<svg style="left:532px;top:35.5px" width="10" height="10" viewBox="0 0 10 10"><rect x=".8" y=".8" width="8.400" height="7.200" fill="none" stroke="#4463e6" stroke-width="1.100"/><path d="M2.800 3.200h4.400M2.800 5.500h3" stroke="#4463e6" stroke-width=".9"/><circle cx="8.800" cy="8.600" r="1.200" fill="#4463e6"/></svg>
<svg style="left:546.500px;top:39.5px" width="4" height="3" viewBox="0 0 4 3"><path d="M0 0h4L2 2.500z" fill="#4463e6"/></svg>
<svg style="left:567px;top:35.5px" width="10" height="10" viewBox="0 0 10 10"><rect x=".5" y=".5" width="8" height="3.200" rx=".6" fill="#484848"/><path d="M8.500 2h1v3H4.800v1.500" fill="none" stroke="#484848" stroke-width=".9"/><rect x="4" y="6.300" width="1.800" height="3.500" fill="#484848"/></svg>
<svg style="left:591px;top:35.5px" width="10" height="10" viewBox="0 0 10 10"><path d="M5 .8A4.200 4.200 0 1 0 5 9.200c.9 0 1.200-.7.800-1.300-.5-.8 0-1.600 1-1.600h1A1.500 1.500 0 0 0 9.300 4.800 4.300 4.300 0 0 0 5 .8z" fill="#484848"/><circle cx="3" cy="4" r=".8" fill="#fcfcfc"/><circle cx="5" cy="2.800" r=".8" fill="#fcfcfc"/><circle cx="7" cy="4" r=".8" fill="#fcfcfc"/><circle cx="3.200" cy="6.300" r=".8" fill="#fcfcfc"/></svg>
<div class="abs" style="left:599px;top:31.300px;width:4.400px;height:4.400px;border-radius:50%;background:#d0162c"></div>
<svg style="left:620px;top:35.5px" width="10" height="10" viewBox="0 0 10 10"><rect x=".7" y=".7" width="8.600" height="8.600" fill="none" stroke="#484848" stroke-width="1" stroke-dasharray="2.100 1.150"/><rect x="3.200" y="3.200" width="3.600" height="3.600" fill="none" stroke="#484848" stroke-width=".9"/></svg>
<svg style="left:643px;top:35.5px" width="10" height="10" viewBox="0 0 10 10"><path d="M4.200 1.200l3.300 2.600-1.400 1.900L2.800 3.100z" fill="#484848"/><path d="M5.500 5.200l2.800 2.300" stroke="#484848" stroke-width="1.200"/><path d="M1.500 7.300h4.500" stroke="#484848" stroke-width=".8"/><path d="M.5 9.300h9" stroke="#484848" stroke-width=".9"/></svg>
<svg style="left:671.500px;top:35.5px" width="11" height="10" viewBox="0 0 11 10"><path d="M1 3.500h2.300a1.400 1.400 0 1 1 2.600 0H8.500v2.200a1.400 1.400 0 1 1 0 2.600V10H5.900a1.400 1.400 0 1 0-2.600 0H1z" fill="#484848"/></svg>
<svg style="left:701px;top:35.5px" width="10" height="10" viewBox="0 0 10 10"><circle cx="5" cy="5" r="4.200" fill="none" stroke="#484848" stroke-width="1"/><circle cx="5" cy="5" r="2.200" fill="none" stroke="#484848" stroke-width="1"/></svg>
<svg style="left:730.500px;top:35.5px" width="9" height="10" viewBox="0 0 9 10"><rect x="1" y="2" width="7" height="8" rx=".8" fill="#484848"/><rect x="2.500" y=".5" width="4" height="1.500" fill="#484848"/><rect x="3" y="4.500" width="3" height="3" fill="#fcfcfc"/></svg>
<svg style="left:606px;top:39.5px" width="4" height="3" viewBox="0 0 4 3"><path d="M.5.500l1.500 1.500 1.500-1.500" fill="none" stroke="#bbb" stroke-width=".7"/></svg>
<svg style="left:659px;top:39.5px" width="4" height="3" viewBox="0 0 4 3"><path d="M.5.500l1.500 1.500 1.500-1.500" fill="none" stroke="#bbb" stroke-width=".7"/></svg>
<svg style="left:688px;top:39.5px" width="4" height="3" viewBox="0 0 4 3"><path d="M.5.500l1.500 1.500 1.500-1.500" fill="none" stroke="#bbb" stroke-width=".7"/></svg>
<svg style="left:717px;top:39.5px" width="4" height="3" viewBox="0 0 4 3"><path d="M.5.500l1.500 1.500 1.500-1.500" fill="none" stroke="#bbb" stroke-width=".7"/></svg>
<svg style="left:745px;top:39.5px" width="4" height="3" viewBox="0 0 4 3"><path d="M.5.500l1.500 1.500 1.500-1.500" fill="none" stroke="#bbb" stroke-width=".7"/></svg>

<!-- ===== popup: order detection ===== -->
<div class="abs" style="left:653.500px;top:50.5px;width:112.500px;height:135px;background:#fff;border-radius:3px;box-shadow:0 1px 4px rgba(0,0,0,.18)"></div>
<div class="t cy" style="left:660.500px;top:60.5px;font-size:7.500px;font-weight:bold;color:#222">주문 감지</div>
<div class="abs" style="left:653.500px;top:70.5px;width:112.500px;height:1px;background:#f0f0f0"></div>
<div class="t cy" style="left:660.500px;top:79.5px;font-size:5.800px;color:#bdbdbd">수동 테스트</div>
<div class="t cy" style="left:660.500px;top:99.30000000000001px;font-size:6.700px;color:#444">유효성 검측</div>
<div class="t cy" style="left:660.500px;top:121.80000000000001px;font-size:6.700px;color:#444">간섭 탐지</div>
<div class="t cy" style="left:660.500px;top:144.3px;font-size:6.700px;color:#444">규칙 검측</div>
<svg style="left:756px;top:96.80000000000001px" width="3" height="5" viewBox="0 0 3 5"><path d="M.5.500l2 2-2 2" fill="none" stroke="#bbb" stroke-width=".7"/></svg>
<svg style="left:756px;top:119.30000000000001px" width="3" height="5" viewBox="0 0 3 5"><path d="M.5.500l2 2-2 2" fill="none" stroke="#bbb" stroke-width=".7"/></svg>
<svg style="left:756px;top:141.8px" width="3" height="5" viewBox="0 0 3 5"><path d="M.5.500l2 2-2 2" fill="none" stroke="#bbb" stroke-width=".7"/></svg>
<div class="abs" style="left:702px;top:162.5px;width:57px;height:15.500px;background:#3c7af0;border-radius:1.500px"></div>
<div class="t c" style="left:730.500px;top:169.500px;font-size:7.400px;font-weight:bold;color:#fff">모두 테스트</div>

<!-- ===== dark floating toolbar ===== -->
<div class="abs" style="left:819.500px;top:69.19999999999999px;width:80.500px;height:14.600px;background:#333437;border-radius:2.500px"></div>
<svg style="left:829px;top:71.5px" width="10" height="10" viewBox="0 0 10 10"><rect x=".8" y=".8" width="8.400" height="8.400" fill="none" stroke="#fff" stroke-width="1.300" stroke-dasharray="2.100 1.050"/><rect x="3.300" y="3.300" width="3.400" height="3.400" fill="none" stroke="#fff" stroke-width="1"/></svg>
<div class="t cy" style="left:843px;top:76.69999999999999px;font-size:6.800px;font-weight:bold;color:#fff">내부 공간 설계</div>
<svg style="left:887.500px;top:73.5px" width="5" height="7" viewBox="0 0 5 7"><path d="M1 .7l3 2.800-3 2.800" fill="none" stroke="#fff" stroke-width="1.200"/></svg>
<div class="abs" style="left:819px;top:86px;width:177.500px;height:21.600px;background:#3b3c3f;border-radius:2.500px"></div>
<div class="abs" style="left:983.500px;top:86px;width:1px;height:21.600px;background:#2a2b2d"></div>
<div class="abs" style="left:821.500px;top:92px;width:1px;height:10px;border-left:1px dotted #777"></div>
<div class="abs" style="left:823.500px;top:92px;width:1px;height:10px;border-left:1px dotted #777"></div>
<div class="abs" style="left:828px;top:88px;width:18px;height:18px;background:#56575b;border-radius:2px"></div>
<svg style="left:832.500px;top:91.5px" width="11" height="11" viewBox="0 0 11 11"><rect x=".7" y="3.300" width="7" height="7" fill="none" stroke="#e8e8e8" stroke-width=".9" stroke-dasharray="1.500 1"/><rect x=".7" y="6.300" width="4" height="4" fill="#e8e8e8"/><path d="M5 6L10 1M7 .7h3.300V4" fill="none" stroke="#e8e8e8" stroke-width="1.200"/></svg>
<div class="abs" style="left:843px;top:103px;width:2px;height:2px;background:#e8e8e8"></div>
<svg style="left:855px;top:91.5px" width="10" height="11" viewBox="0 0 10 11"><path d="M1.500 3.500h7l-.6 7H2.100z" fill="#e8e8e8"/><rect x=".7" y="1.700" width="8.600" height="1.300" fill="#e8e8e8"/><rect x="3.500" y=".4" width="3" height="1.500" fill="#e8e8e8"/></svg>
<svg style="left:877px;top:91.5px" width="11" height="11" viewBox="0 0 11 11"><rect x=".7" y=".7" width="9.600" height="9.600" fill="none" stroke="#e8e8e8" stroke-width="1.200"/><rect x="2.500" y="2.500" width="3.500" height="3.500" fill="#e8e8e8"/><rect x="5" y="5" width="3.500" height="3.500" fill="none" stroke="#e8e8e8" stroke-width=".9"/></svg>
<svg style="left:899px;top:91px" width="11" height="12" viewBox="0 0 11 12"><path d="M3.500 6.500L8.500 1l1.500 1.500L5 8l-2 .5z" fill="#e8e8e8"/><path d="M.8 8v3.500M10.200 8v3.500M.8 9.800h9.400" fill="none" stroke="#e8e8e8" stroke-width="1"/></svg>
<svg style="left:921.500px;top:91.5px" width="11" height="11" viewBox="0 0 11 11"><path d="M1 3v7h7" fill="none" stroke="#e8e8e8" stroke-width="1.200"/><rect x="3" y=".5" width="7.500" height="7.500" fill="#e8e8e8"/><path d="M6.750 2.200v4.100M4.700 4.250h4.100" stroke="#38393c" stroke-width="1.200"/></svg>
<svg style="left:943.500px;top:91px" width="12" height="12" viewBox="0 0 12 12"><path d="M5.500 1l3 3-3.500 2.500-2-2z" fill="#e8e8e8"/><path d="M6.500 5.500l3.500 3" stroke="#e8e8e8" stroke-width="1.400"/><path d="M1 8.500h6M.5 10.500h8.500" stroke="#e8e8e8" stroke-width="1"/></svg>
<div class="abs" style="left:955px;top:103px;width:2px;height:2px;background:#e8e8e8"></div>
<svg style="left:966px;top:91.5px" width="12" height="11" viewBox="0 0 12 11"><path d="M.5 2.500h2.500L4 1h4l1 1.500h2.500V10H.5z" fill="#e8e8e8"/><circle cx="7.500" cy="7" r="2.700" fill="#38393c"/><path d="M7.500 5l1.800 1v2L7.500 9 5.700 8V6z" fill="#e8e8e8"/></svg>
<svg style="left:987px;top:94px" width="6" height="6" viewBox="0 0 6 6"><path d="M.7.800l2 2.200-2 2.200M3.300.8l2 2.200-2 2.200" fill="none" stroke="#aaa" stroke-width=".8"/></svg>

<!-- ===== bottom-left controls ===== -->
<div class="box" style="left:214px;top:612.5px;width:34.500px;height:19px"></div>
<svg style="left:219px;top:616.5px" width="11" height="11" viewBox="0 0 11 11"><path d="M5.500.8L10 3.300 5.500 5.800 1 3.300z" fill="#333"/><path d="M1 5.500l4.500 2.500L10 5.500M1 7.700l4.500 2.500L10 7.700" fill="none" stroke="#333" stroke-width="1.100"/></svg>
<div class="t cy" style="left:233.500px;top:622.800px;font-size:8.600px;color:#222">1F</div>
<div class="box" style="left:253.500px;top:612.5px;width:66.500px;height:19px"></div>
<div class="t cy" style="left:262px;top:622.800px;font-size:8.800px;color:#222">2D</div>
<svg style="left:277.500px;top:621px" width="4" height="3" viewBox="0 0 4 3"><path d="M.5.500l1.500 1.500 1.500-1.500" fill="none" stroke="#aaa" stroke-width=".7"/></svg>
<div class="abs" style="left:287px;top:615px;width:27.500px;height:14px;background:#dde7fb;border-radius:2px"></div>
<div class="t cy" style="left:291px;top:622.800px;font-size:8.800px;color:#3a6cf0">3D</div>
<svg style="left:307px;top:621px" width="4" height="3" viewBox="0 0 4 3"><path d="M.5.500l1.500 1.500 1.500-1.500" fill="none" stroke="#7fa3f3" stroke-width=".7"/></svg>
<div class="box" style="left:325.500px;top:612.5px;width:72.500px;height:19px"></div>
<svg style="left:333px;top:618px" width="11" height="8" viewBox="0 0 11 8"><path d="M.5 4C2 1.500 3.700.500 5.500.500S9 1.500 10.500 4C9 6.500 7.300 7.500 5.500 7.500S2 6.500.5 4z" fill="#444"/><circle cx="5.500" cy="4" r="1.700" fill="#fafafa"/><circle cx="5.500" cy="4" r=".8" fill="#444"/></svg>
<svg style="left:355.500px;top:617px" width="11" height="11" viewBox="0 0 11 11"><path d="M.8 3.300L3.300.8h7v6.900l-2.500 2.500h-7z" fill="#444"/><path d="M.8 3.300h7v6.900M7.800 3.300L10.300.8" fill="none" stroke="#fafafa" stroke-width=".7"/><rect x="2.300" y="5" width="4" height="3.700" fill="none" stroke="#fafafa" stroke-width=".6"/></svg>
<svg style="left:378px;top:617px" width="11" height="11" viewBox="0 0 11 11"><circle cx="5.500" cy="5.500" r="4.800" fill="#444"/><path d="M2 7.500A3.800 3.800 0 0 1 9 7.500" fill="none" stroke="#fafafa" stroke-width=".9"/><path d="M5.500 7L8 3.500" stroke="#fafafa" stroke-width="1.100"/></svg>
<div class="box" style="left:403px;top:612.5px;width:113.500px;height:19px"></div>
<svg style="left:410.500px;top:618.8px" width="7" height="7" viewBox="0 0 7 7"><circle cx="3.500" cy="3.500" r="3.500" fill="#d8232f"/><path d="M2.200 2.200l2.600 2.600M4.800 2.200L2.200 4.800" stroke="#fff" stroke-width=".9"/></svg>
<div class="t cy" style="left:420.500px;top:622.800px;font-size:8.300px;color:#d8232f">0</div>
<svg style="left:431px;top:618.8px" width="7" height="7" viewBox="0 0 7 7"><circle cx="3.500" cy="3.500" r="3.500" fill="#f0a020"/><path d="M3.500 1.500v2.500M3.500 4.800v.9" stroke="#fff" stroke-width=".9"/></svg>
<div class="t cy" style="left:441px;top:622.800px;font-size:8.300px;color:#e9a52e">23</div>
<svg style="left:456.500px;top:618.8px" width="7" height="7" viewBox="0 0 7 7"><rect x=".5" y=".5" width="6" height="6" rx=".8" fill="none" stroke="#444" stroke-width=".9"/><rect x=".5" y=".5" width="6" height="2" fill="#444"/></svg>
<div class="t cy" style="left:467px;top:622.800px;font-size:8.300px;color:#333">17</div>
<svg style="left:483px;top:621px" width="4" height="3" viewBox="0 0 4 3"><path d="M.5.500l1.500 1.500 1.500-1.500" fill="none" stroke="#aaa" stroke-width=".7"/></svg>
<svg style="left:494px;top:618.3px" width="8" height="8" viewBox="0 0 8 8"><path d="M6.800 3A3 3 0 0 0 1.300 2.800M1.200 5A3 3 0 0 0 6.700 5.200" fill="none" stroke="#3a6cf0" stroke-width="1"/><path d="M.6 1v2.200h2.200zM7.400 7V4.800H5.200z" fill="#3a6cf0"/></svg>
<svg style="left:504px;top:621px" width="4" height="3" viewBox="0 0 4 3"><path d="M.5.500l1.500 1.500 1.500-1.500" fill="none" stroke="#7fa3f3" stroke-width=".7"/></svg>

<!-- ===== bottom-right controls ===== -->
<div class="box" style="left:1109px;top:587.5px;width:27.500px;height:20px"></div>
<div class="abs" style="left:1112px;top:592px;width:1px;height:11px;background:#e2e2e2"></div>
<svg style="left:1121.500px;top:592px" width="9" height="11" viewBox="0 0 9 11"><rect x=".5" y="1.500" width="8" height="9" rx=".8" fill="#333"/><rect x="2.700" y=".3" width="3.600" height="2.400" fill="#333"/><path d="M2.500 5.500l2.500-1.500v3z" fill="#fafafa"/><rect x="2" y="7.500" width="5" height="1.800" fill="#fafafa"/></svg>
<div class="box" style="left:931px;top:612px;width:30px;height:20px"></div>
<svg style="left:941px;top:617px" width="10" height="10" viewBox="0 0 10 10"><rect x=".5" y=".5" width="9" height="4" rx="2" fill="#333"/><circle cx="7.300" cy="2.500" r="1.100" fill="#fafafa"/><rect x=".5" y="5.500" width="9" height="4" rx="2" fill="#333"/><circle cx="2.700" cy="7.500" r="1.100" fill="#fafafa"/></svg>
<div class="box" style="left:964.500px;top:612px;width:178.500px;height:20px"></div>
<svg style="left:973.500px;top:616.5px" width="12" height="11" viewBox="0 0 12 11"><path d="M.8 6V1h8.500v2.500l2-1.300v4" fill="none" stroke="#333" stroke-width="1"/><rect x="4" y="4.500" width="6.500" height="5.500" fill="none" stroke="#333" stroke-width=".9" stroke-dasharray="1.600 1"/><path d="M1 8.500L3.500 6" stroke="#333" stroke-width=".9"/></svg>
<svg style="left:996px;top:616.5px" width="12" height="11" viewBox="0 0 12 11"><path d="M.8 6V1h8.500v2.500l2-1.300v2" fill="none" stroke="#333" stroke-width="1"/><circle cx="8" cy="7.500" r="2.300" fill="none" stroke="#333" stroke-width="1.300" stroke-dasharray="1.200 .8"/><circle cx="8" cy="7.500" r="1" fill="#333"/><path d="M1 8.500L3.500 6" stroke="#333" stroke-width=".9"/></svg>
<svg style="left:1019.500px;top:617px" width="10" height="10" viewBox="0 0 10 10"><path d="M.6 3V.6H3M7 .6h2.400V3M9.400 7v2.400H7M3 9.400H.6V7" fill="none" stroke="#333" stroke-width="1.100"/><circle cx="5" cy="5" r="1.400" fill="#333"/></svg>
<svg style="left:1041px;top:616px" width="12" height="12" viewBox="0 0 12 12"><path d="M5 9.500H.7V.7h8.800V5" fill="none" stroke="#333" stroke-width="1.100"/><circle cx="8" cy="8" r="2.500" fill="none" stroke="#333" stroke-width="1"/><path d="M9.800 9.800l1.700 1.700" stroke="#333" stroke-width="1.100"/></svg>
<div class="abs" style="left:1065px;top:621.5px;width:8px;height:1.400px;background:#333"></div>
<div class="abs" style="left:1077.500px;top:615px;width:45px;height:14px;background:#f9f9f9;border-radius:1px"></div>
<div class="t c" style="left:1090.500px;top:622.800px;font-size:6.300px;color:#444">309</div>
<div class="t c" style="left:1111.500px;top:622.800px;font-size:6.300px;color:#bbb">%</div>
<svg style="left:1126px;top:618px" width="8" height="8" viewBox="0 0 8 8"><path d="M4 0v8M0 4h8" stroke="#333" stroke-width="1.400"/></svg>
<!-- bottom strip -->
<div class="abs" style="left:0;top:636.5px;width:1280px;height:5px;background:rgba(0,0,0,.1)"></div>
<svg style="left:725px;top:24px" width="8" height="11" viewBox="0 0 8 11"><path d="M1 .8v8l2-1.700 1.300 3 1.200-.5-1.300-3H7z" fill="#fff" stroke="#222" stroke-width=".7"/></svg>
<!--BOTTOM_END-->
</div>
</body>
</html>
